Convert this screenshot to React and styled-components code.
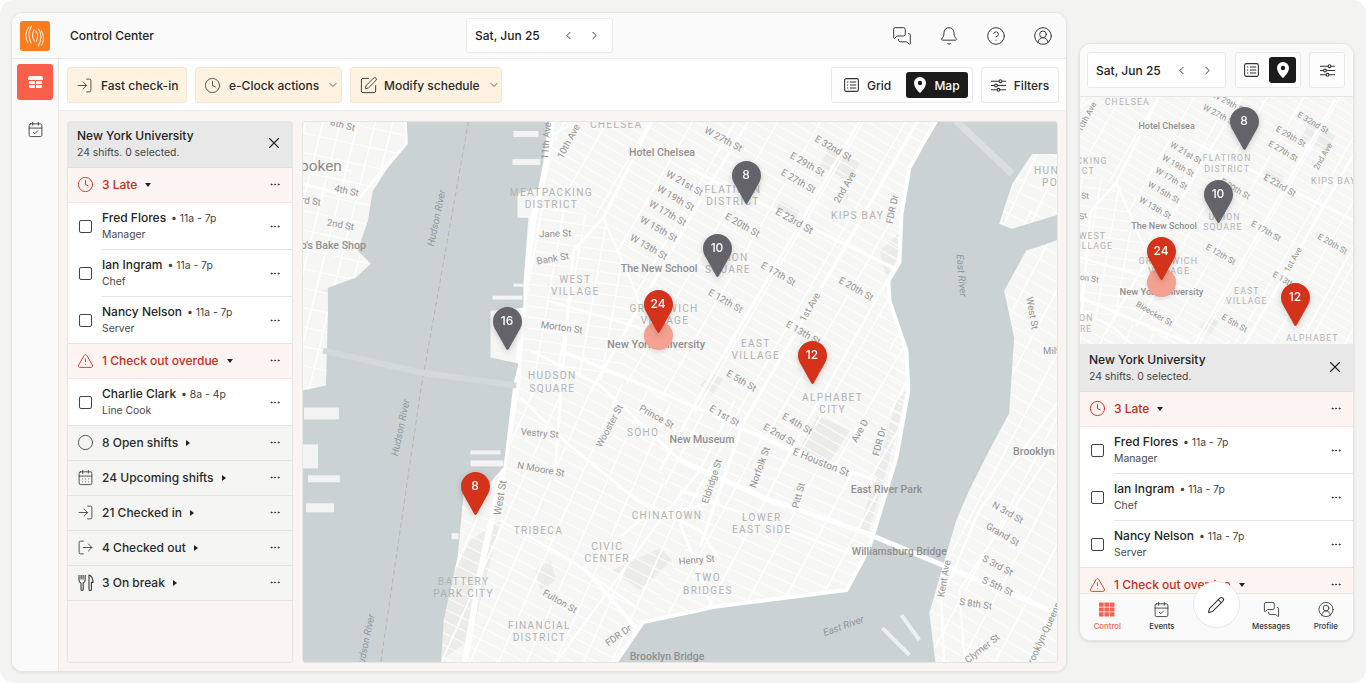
import React from 'react'
import styled, { createGlobalStyle } from 'styled-components'
import {
  Bell, CalendarCheck, CalendarDays, ChevronDown, ChevronLeft, ChevronRight, Circle, CircleHelp,
  CircleUserRound, Clock, Ellipsis, LogIn, LogOut, MessagesSquare, Pencil, SquarePen,
  TriangleAlert, X
} from 'lucide-react'

const Global = createGlobalStyle`
  html, body { margin: 0; padding: 0; background: #fff; }
  body { font-family: Inter, "Liberation Sans", sans-serif; color: #222; }
  * { box-sizing: border-box; }
`

/* ---------- map drawing ---------- */

// parallel lines through (cx, cy) at the given angle, as one path
const lines = (cx, cy, angle, spacing, count, len = 900) => {
  const rad = (angle * Math.PI) / 180
  const dx = Math.cos(rad)
  const dy = Math.sin(rad)
  let d = ''
  for (let i = -count; i <= count; i++) {
    const px = cx - dy * spacing * i
    const py = cy + dx * spacing * i
    d += `M${(px - dx * len).toFixed(1)} ${(py - dy * len).toFixed(1)}L${(px + dx * len).toFixed(1)} ${(py + dy * len).toFixed(1)}`
  }
  return d
}

const regions = [
  { id: 'midtown', pts: '548,100 960,100 915,500 620,382 635,290 603,217 548,210', streets: [760, 300, 30, 9.5, 50], aves: [760, 300, -60, 37, 14] },
  { id: 'village', pts: '520,200 603,217 635,290 620,382 520,370', streets: [570, 300, 8, 11, 16], aves: [570, 300, -80, 22, 8] },
  { id: 'tribeca', pts: '440,370 620,382 690,408 660,480 700,520 620,670 440,670', streets: [570, 500, 27, 11, 22], aves: [570, 500, -66, 26, 10] },
  { id: 'lowereast', pts: '690,408 915,500 860,610 620,670 700,520 660,480', streets: [760, 510, 24, 11, 16], aves: [760, 510, -62, 32, 10] },
  { id: 'brooklyn', pts: '890,210 1070,210 1070,670 890,670', streets: [980, 500, 30, 12, 28], aves: [980, 500, -62, 30, 10] },
  { id: 'greenpoint', pts: '990,100 1070,100 1070,240 990,240', streets: [1030, 170, 25, 12, 14], aves: [1030, 170, -65, 24, 6] },
  { id: 'jersey', pts: '290,100 420,100 420,400 290,400', streets: [350, 220, 12, 19, 14], aves: [350, 220, -76, 17, 10] }
]

const majorRoads = [
  { w: 6, pts: '553,110 547,160 533,217 523,300 517,380 503,467 480,570 463,670' },
  { w: 3, pts: '573,250 603,217 653,118' },
  { w: 3, pts: '573,250 566,330 560,400 555,470' },
  { w: 2.6, pts: '603,217 635,290 648,330' },
  { w: 3, pts: '590,392 700,200 750,118' },
  { w: 2.6, pts: '541,140 575,121' },
  { w: 3.4, pts: '690,168 900,270' },
  { w: 2.6, pts: '548,300 700,345' },
  { w: 3.4, pts: '560,350 680,400 797,452 877,480' },
  { w: 5, pts: '680,460 763,497 867,533 960,572 1060,614' },
  { w: 3, pts: '530,350 600,385 680,460' },
  { w: 3, pts: '680,490 860,557' },
  { w: 3.4, pts: '700,547 743,423 920,117' },
  { w: 3, pts: '660,470 700,395 860,120' },
  { w: 2.6, pts: '780,470 930,205' },
  { w: 3, pts: '680,523 737,670' },
  { w: 4, pts: '583,567 673,670' },
  { w: 2.6, pts: '550,670 660,520 700,470 735,400' },
  { w: 3, pts: '520,397 567,443 637,500 700,530 720,560' },
  { w: 2.6, pts: '500,520 570,560 640,610' },
  { w: 2.6, pts: '583,567 640,520 720,500' },
  { w: 2.6, pts: '945,670 942,600 980,510 1060,400' },
  { w: 2.2, pts: '966,670 960,590 1060,440' },
  { w: 3, pts: '302,183 358,198 385,165 407,143 405,118' },
  { w: 2, pts: '302,160 350,170' }
]

const coast = '938,118 925,140 910,167 902,213 900,262 889,280 890,300 907,350 909,390 897,457 870,547 847,590 743,603 713,607 700,610 643,622 617,660 600,670'

const water = [
  '406,118 407,143 387,167 372,190 367,220 357,250 370,263 355,277 327,287 327,310 326,350 325,385 302,390 302,670 440,670 443,620 457,557 463,493 490,482 503,467 513,383 518,363 490,357 490,310 523,307 523,283 528,217 517,217 517,193 538,187 543,160 548,118',
  `${coast} 937,670 930,613 957,520 970,490 990,450 1010,413 1015,337 1005,290 1027,250 1062,238 1062,213 1013,228 1000,223 1013,183 1033,153 1062,153 1062,118`
]

const piers = [
  [513, 130, 25, 6], [512, 158, 28, 6], [513, 283, 10, 3], [492, 295, 30, 4], [303, 407, 35, 12], [302, 444, 15, 24],
  [307, 475, 32, 7], [305, 503, 28, 9], [470, 450, 30, 4], [470, 460, 33, 6], [451, 533, 7, 6]
]

const parks = [
  '897,400 907,390 890,460 868,535 860,530 880,460',
  '440,600 470,540 500,520 470,640 440,660',
  '535,570 550,560 556,580 540,590',
  '700,385 712,372 724,378 712,395',
  '818,415 850,430 830,462 800,448',
  '880,250 900,232 900,262 888,280',
  '612,570 660,548 672,560 640,590',
  '780,200 800,210 794,222 774,212',
  '830,145 860,162 850,180 820,165',
  '490,357 518,363 512,385 490,380',
  '320,290 355,277 370,263 345,300'
]

const street = { size: 9.6, fill: '#929292' }
const area = { size: 10.2, fill: '#b2b2b2', spacing: 1.3 }
const place = { size: 10.6, fill: '#909090', weight: 500 }
const river = { size: 10, fill: '#8f999d', italic: true }

const labels = [
  ['8th St', 341, 127, 15, street], ['Hoboken', 341, 170, 0, { size: 15.5, fill: '#8a8a8a', anchor: 'end' }], ['4th St', 345, 193, 12, street],
  ['3rd St', 307, 203, 8, street], ['2nd St', 339, 227, 10, street], ["Carlo's Bake Shop", 365, 248, 0, { ...place, anchor: 'end' }],
  ['Hudson River', 439, 218, -78, river], ['11th Ave', 549, 140, -85, street], ['10th Ave', 571, 142, -62, street],
  ['CHELSEA', 616, 127, 0, area], ['Hotel Chelsea', 662, 155, 0, place], ['MEATPACKING', 551, 195, 0, area], ['DISTRICT', 551, 207, 0, area],
  ['Jane St', 555, 236, -2, street], ['Bank St', 553, 261, -10, street], ['WEST', 575, 282, 0, area], ['VILLAGE', 575, 294, 0, area],
  ['Morton St', 561, 330, 8, street], ['HUDSON', 552, 378, 0, area], ['SQUARE', 552, 391, 0, area],
  ['W 21st St', 683, 185, 30, street], ['W 19th St', 674, 200, 30, street], ['W 17th St', 666, 215, 30, street], ['W 15th St', 657, 231, 30, street],
  ['W 13th St', 647, 249, 30, street], ['The New School', 659, 271, 0, place], ['GREENWICH', 664, 311, 0, area], ['VILLAGE', 665, 323, 0, area],
  ['New York University', 656, 347, 0, { ...place, size: 11 }], ['W 27th St', 722, 141, 28, street], ['E 32nd St', 832, 150, 30, street],
  ['E 29th St', 806, 166, 30, street], ['E 27th St', 797, 183, 30, street], ['2nd Ave', 848, 188, -60, street], ['FLATIRON', 733, 192, 0, area],
  ['DISTRICT', 733, 204, 0, area], ['E 23rd St', 793, 223, 30, { ...street, size: 10.4 }], ['E 20th St', 741, 227, 30, street], ['KIPS BAY', 858, 218, 0, area],
  ['FDR Dr', 896, 209, -78, street], ['UNION', 730, 260, 0, area], ['SQUARE', 728, 272, 0, area], ['E 17th St', 777, 276, 30, street],
  ['E 20th St', 855, 291, 30, street], ['East River', 959, 275, 85, river], ['E 12th St', 724, 303, 30, street], ['1st Ave', 813, 308, -60, street],
  ['West St', 1030, 313, 80, street], ['EAST', 756, 346, 0, area], ['VILLAGE', 756, 358, 0, area], ['E 13th St', 802, 335, 30, street],
  ['E 5th St', 740, 383, 30, street], ['HUNTERS', 1035, 173, 0, { ...area, anchor: 'start' }], ['POINT', 1043, 185, 0, { ...area, anchor: 'start' }],
  ['Milton St', 1044, 353, 0, { ...street, anchor: 'start' }], ['ALPHABET', 833, 401, 0, area], ['CITY', 833, 413, 0, area],
  ['E 1st St', 723, 418, 30, street], ['E 4th St', 796, 426, 30, street], ['E 2nd St', 778, 437, 30, street], ['Ave D', 863, 432, -60, street],
  ['FDR Dr', 883, 442, -75, street], ['New Museum', 702, 443, 0, place], ['E Houston St', 820, 465, 22, { ...street, size: 10.4 }], ['Norfolk St', 763, 468, -70, street],
  ['Eldridge St', 715, 482, -72, street], ['Pitt St', 802, 496, -75, street], ['East River Park', 887, 493, 0, place], ['Brooklyn Bowl', 1014, 455, 0, { ...place, anchor: 'start' }],
  ['N 3rd St', 1007, 515, 30, street], ['Grand St', 1002, 537, 30, street], ['S 3rd St', 997, 568, 28, street], ['S 5th St', 997, 589, 25, street],
  ['S 8th St', 976, 607, 8, street], ['Kent Ave', 948, 579, -80, street], ['Williamsburg Bridge', 900, 555, 0, place], ['LOWER', 762, 521, 0, area],
  ['EAST SIDE', 762, 533, 0, area], ['CHINATOWN', 667, 519, 0, area], ['TWO', 708, 581, 0, area], ['BRIDGES', 708, 594, 0, area], ['Henry St', 697, 563, -5, street],
  ['East River', 845, 629, -20, river], ['Clymer St', 985, 651, -38, street], ['Brooklyn-Queens', 1047, 637, -65, street], ['Brooklyn Bridge', 667, 660, 0, place],
  ['Hudson River', 403, 428, -78, river], ['Hudson River', 368, 643, -78, river], ['Vestry St', 539, 436, 5, street], ['N Moore St', 540, 472, 10, street],
  ['West St', 503, 498, -80, { ...street, size: 10.4 }], ['SOHO', 643, 436, 0, area], ['Wooster St', 612, 427, -62, street], ['Prince St', 655, 419, 30, street],
  ['TRIBECA', 538, 534, 0, area], ['CIVIC', 607, 550, 0, area], ['CENTER', 607, 562, 0, area], ['BATTERY', 463, 585, 0, area], ['PARK CITY', 463, 597, 0, area],
  ['Fulton St', 558, 604, 30, street], ['FINANCIAL', 539, 629, 0, area], ['DISTRICT', 539, 641, 0, area], ['FDR Dr', 620, 638, -35, street]
]

const compactLabels = [
  ...labels.filter(([, x, y]) => x > 530 && x < 900 && y < 415),
  ['W 29th St', 734, 127, 28, street],
  ['Bleecker St', 646, 372, 30, street]
]

const MapLabel = styled.text`
  font-family: Roboto, "Liberation Sans", sans-serif;
`

const MapArt = ({ viewBox, compact }) => (
  <svg width="100%" height="100%" viewBox={viewBox} preserveAspectRatio="none" style={{ display: 'block' }}>
    <rect x="280" y="100" width="800" height="590" fill="#f6f6f5" />
    <defs>
      {regions.map(r => <clipPath key={r.id} id={`${compact ? 'c' : 'w'}-${r.id}`}><polygon points={r.pts} /></clipPath>)}
    </defs>
    {parks.map(p => <polygon key={p} points={p} fill="#ecedeb" />)}
    {regions.map(r => (
      <g key={r.id} clipPath={`url(#${compact ? 'c' : 'w'}-${r.id})`} fill="none" stroke="#fff">
        <path d={lines(...r.streets)} strokeWidth="1" />
        <path d={lines(...r.aves)} strokeWidth="1.6" />
      </g>
    ))}
    {majorRoads.map(r => <polyline key={r.pts} points={r.pts} fill="none" stroke="#fff" strokeWidth={r.w} strokeLinejoin="round" />)}
    <polygon points={water[0]} fill="#cbd2d4" />
    <polygon points={water[1]} fill="#cbd2d4" />
    <polyline points={coast} fill="none" stroke="#fff" strokeWidth="4" strokeLinejoin="round" />
    {piers.map(([x, y, w, h]) => <rect key={`${x}-${y}`} x={x} y={y} width={w} height={h} fill="#f2f3f2" />)}
    <polyline points="468,120 420,390 380,662" fill="none" stroke="#b9b4b0" strokeDasharray="5 3" />
    <polyline points="322,350 420,372 516,385" fill="none" stroke="#d3d9da" strokeWidth="6" />
    <polyline points="957,120 1013,173" fill="none" stroke="#d9dfdf" strokeWidth="7" />
    <polyline points="883,628 910,655" fill="none" stroke="#eef0f0" strokeWidth="4" />
    <polyline points="902,615 920,640" fill="none" stroke="#eef0f0" strokeWidth="4" />
    <polyline points="867,533 960,572" fill="none" stroke="#fff" strokeWidth="5" />
    {(compact ? compactLabels : labels).map(([text, x, y, rot, s]) => (
      <MapLabel
        key={`${text}-${x}-${y}`}
        transform={`translate(${x} ${y}) rotate(${rot})`}
        textAnchor={s.anchor || 'middle'}
        fontSize={s.size}
        fill={s.fill}
        fontWeight={s.weight || 400}
        fontStyle={s.italic ? 'italic' : 'normal'}
        letterSpacing={s.spacing || 0}
      >
        {text}
      </MapLabel>
    ))}
  </svg>
)

/* ---------- small drawn icons ---------- */

const Logo = () => (
  <svg width="20" height="22" viewBox="0 0 20 22" fill="none" stroke="#ffeadb" strokeWidth="1.1" strokeLinecap="round">
    <path d="M4 2C.6 6-.2 12 2.6 17" />
    <path d="M6.5 1C3.5 6 3.2 12 6 18" />
    <path d="M9 5C7 9 7.2 13 9.4 16" />
    <path d="M11 6c2.2 3.4 2.2 7 .2 10.5" />
    <path d="M13.6 4c3.2 5 3 11-.4 17" />
    <path d="M16.4 6c2.8 4.6 2.8 9.6 0 14.5" />
  </svg>
)

const TableIcon = () => (
  <svg width="15" height="13" viewBox="0 0 16 14" fill="#fff">
    <path d="M2 0h12a2 2 0 0 1 2 2v2.4H0V2a2 2 0 0 1 2-2z" opacity=".95" />
    <rect x="1" y="5.6" width="6.3" height="3" />
    <rect x="8.7" y="5.6" width="6.3" height="3" />
    <path d="M1 9.8h6.3V13H2.4A1.4 1.4 0 0 1 1 11.6zM8.7 9.8H15v1.8a1.4 1.4 0 0 1-1.4 1.4H8.7z" />
  </svg>
)

const ListIcon = () => (
  <svg width="15" height="14" viewBox="0 0 15 14" fill="none" stroke="#333" strokeWidth="1.1">
    <rect x=".6" y=".6" width="13.8" height="12.8" rx="1.6" />
    <path d="M3 4h1.2M6 4h6.2M3 7h1.2M6 7h6.2M3 10h1.2M6 10h6.2" />
  </svg>
)

const SolidPin = () => (
  <svg width="12" height="16" viewBox="0 0 12 16">
    <path fill="#fff" fillRule="evenodd" d="M6 0a6 6 0 0 1 6 6c0 3.6-3.6 7.8-5.3 9.6a1 1 0 0 1-1.4 0C3.6 13.8 0 9.6 0 6a6 6 0 0 1 6-6zm0 3.8a2.2 2.2 0 1 0 0 4.4 2.2 2.2 0 0 0 0-4.4z" />
  </svg>
)

const SlidersIcon = () => (
  <svg width="15" height="13" viewBox="0 0 15 13" fill="none" stroke="#333" strokeWidth="1.1">
    <path d="M0 2.2h15M0 6.5h15M0 10.8h15" />
    <circle cx="9.5" cy="2.2" r="1.4" fill="#fff" />
    <circle cx="5" cy="6.5" r="1.4" fill="#fff" />
    <circle cx="7.5" cy="10.8" r="1.4" fill="#fff" />
  </svg>
)

const GridSquares = () => (
  <svg width="16" height="14" viewBox="0 0 16 14" fill="#f95f4a">
    {[0, 5.4, 10.8].map(x => [0, 4.9, 9.8].map(y => <rect key={`${x}-${y}`} x={x} y={y} width="4.6" height="4.2" rx=".5" />))}
  </svg>
)

const ForkKnife = () => (
  <svg width="16" height="17" viewBox="0 0 16 17" fill="none" stroke="#3a3a3a" strokeWidth="1.1" strokeLinejoin="round">
    <path d="M1 1v5c0 1.7.9 2.7 2 3.1v6.2a1 1 0 0 0 2.2 0V9.1C6.3 8.7 7.2 7.7 7.2 6V1" />
    <path d="M3.1 1v4.4M5.1 1v4.4" />
    <path d="M11 1c2.6 1 4 3.8 4 7.4h-1.6v6.9a1.2 1.2 0 0 1-2.4 0z" />
  </svg>
)

/* ---------- page frame ---------- */

const Stage = styled.div`
  width: 1366px;
  height: 683px;
  padding: 12px 12px 0 11px;
  background: #f3f3f1;
  border-radius: 14px;
  display: flex;
  align-items: flex-start;
  gap: 12px;
  overflow: hidden;
`

const Desk = styled.div`
  width: 1056px;
  height: 660px;
  flex: none;
  background: #fff;
  border: 1px solid #e4e4e2;
  border-radius: 12px;
  overflow: hidden;
  display: flex;
  flex-direction: column;
  box-shadow: 0 1px 3px rgba(0, 0, 0, .08);
`

const TopBar = styled.header`
  height: 46px;
  flex: none;
  background: #fafafa;
  border-bottom: 1px solid #e6e6e4;
  padding: 0 13px 0 8px;
  display: flex;
  align-items: center;
`

const LogoTile = styled.div`
  width: 30px;
  height: 30px;
  background: #fb7b1f;
  border-radius: 3px;
  display: flex;
  align-items: center;
  justify-content: center;
`

const PageTitle = styled.div`
  margin-left: 20px;
  width: 396px;
  font-size: 12px;
  font-weight: 500;
`

const DatePill = styled.div`
  width: ${p => p.$width}px;
  height: ${p => p.$height}px;
  flex: none;
  background: #fff;
  border: 1px solid #e9e9e7;
  border-radius: 3px;
  padding: 0 11px 0 8px;
  display: flex;
  align-items: center;
  font-size: 12px;
  font-weight: 500;
  white-space: nowrap;

  span { flex: 1; }
  svg { margin-left: 13px; flex: none; }
`

const TopIcons = styled.div`
  margin-left: auto;
  display: flex;
  gap: 27px;
  color: #3a3a3a;
`

const Body = styled.div`
  flex: 1;
  min-height: 0;
  display: flex;
`

const Rail = styled.nav`
  width: 47px;
  flex: none;
  background: #fafafa;
  border-right: 1px solid #e6e6e4;
  padding-top: 5px;
  display: flex;
  flex-direction: column;
  align-items: center;
  gap: 11px;
`

const RailButton = styled.div`
  width: 36px;
  height: 36px;
  border-radius: 3px;
  display: flex;
  align-items: center;
  justify-content: center;
  color: #333;
  background: ${p => (p.$active ? '#f95f4a' : 'transparent')};
`

const Main = styled.main`
  flex: 1;
  min-width: 0;
  display: flex;
  flex-direction: column;
`

const Toolbar = styled.div`
  height: 52px;
  flex: none;
  background: #fff;
  border-bottom: 1px solid #ececea;
  padding: 8px 7px 0 8px;
  display: flex;
  align-items: flex-start;
  gap: 8px;
`

const ActionButton = styled.div`
  width: ${p => p.$width}px;
  height: 36px;
  background: #fff2e0;
  border: 1px solid #f1e7d8;
  border-radius: 3px;
  padding: 0 7px 0 8px;
  display: flex;
  align-items: center;
  gap: 8px;
  font-size: 12px;
  font-weight: 500;
  color: #2a2a2a;
  white-space: nowrap;

  svg { flex: none; color: #3a3a3a; }
  svg:last-child:not(:first-child) { margin-left: auto; }
`

const WidePen = styled(SquarePen)`
  margin-right: -2px;
`

const ViewGroup = styled.div`
  width: ${p => p.$width}px;
  height: ${p => p.$height}px;
  flex: none;
  margin-left: ${p => p.$gap || 0};
  background: #fdfdfd;
  border: 1px solid #e9e9e7;
  border-radius: 3px;
  padding: 4px;
  display: flex;
  align-items: stretch;
`

const ViewOption = styled.div`
  flex: ${p => (p.$grow ? 1 : 'none')};
  width: ${p => p.$width}px;
  padding-left: ${p => p.$inset || 0}px;
  border-radius: 3px;
  display: flex;
  align-items: center;
  justify-content: ${p => (p.$inset ? 'flex-start' : 'center')};
  gap: 8px;
  font-size: 12px;
  font-weight: 500;
  background: ${p => (p.$on ? '#1b1b1b' : 'transparent')};
  color: ${p => (p.$on ? '#fff' : '#2a2a2a')};
`

const Workspace = styled.div`
  flex: 1;
  min-height: 0;
  background: #f8f5f2;
  padding: 10px 8px 8px 8px;
  display: flex;
  gap: 9px;
`

const SidePanel = styled.section`
  width: 226px;
  flex: none;
  background: #f8f5f2;
  border: 1px solid #e6e6e4;
  border-radius: 3px;
  overflow: hidden;
`

const MapFrame = styled.div`
  position: relative;
  flex: ${p => (p.$fill ? 1 : 'none')};
  height: ${p => (p.$height ? `${p.$height}px` : 'auto')};
  border: ${p => (p.$fill ? '1px solid #e6e6e4' : 'none')};
  border-radius: ${p => (p.$fill ? '3px' : '0')};
  overflow: hidden;
`

/* ---------- list rows ---------- */

const PanelHead = styled.div`
  height: ${p => (p.$tall ? 48 : 46)}px;
  background: #e8e8e8;
  padding: ${p => (p.$tall ? 8 : 6)}px 9px 0 9px;
  display: flex;
  justify-content: space-between;
  border-bottom: 1px solid #dfdfdd;
`

const PanelTitle = styled.div`
  font-size: 12px;
  font-weight: 500;
  line-height: 16px;
  color: #222;
`

const PanelSub = styled.div`
  margin-top: 1px;
  font-size: 10.4px;
  line-height: 16px;
  color: #444;
`

const CloseWrap = styled.div`
  margin: 6px 0 0 0;
  color: #222;
`

const SectionRow = styled.div`
  height: 35px;
  padding: 0 11px 1px 9px;
  display: flex;
  align-items: center;
  background: ${p => (p.$alert ? '#fef4f1' : '#f5f5f4')};
  border-bottom: 1px solid ${p => (p.$alert ? '#ebe7e4' : '#e4e4e2')};
  color: ${p => (p.$alert ? '#c22e18' : '#2a2a2a')};
  font-size: 12px;
  font-weight: 500;
`

const IconSlot = styled.div`
  width: 17px;
  height: 17px;
  flex: none;
  margin-right: 8px;
  display: flex;
  align-items: center;
  justify-content: center;
`

const Caret = styled.span`
  margin-left: 8px;
  width: 0;
  height: 0;
  border-style: solid;
  border-color: transparent;
  ${p => (p.$open
    ? 'border-width: 4px 3.5px 0; border-top-color: #222;'
    : 'border-width: 3.5px 0 3.5px 4px; border-left-color: #222;')}
`

const RowMenu = styled.div`
  margin-left: auto;
  width: 12px;
  display: flex;
  justify-content: center;
  color: #333;
`

const ShiftRow = styled.div`
  position: relative;
  height: 47px;
  background: #fff;
  padding: 0 11px 0 9px;
  display: flex;
  align-items: center;
  border-bottom: 1px solid ${p => (p.$inset ? 'transparent' : '#e4e4e2')};

  ${p => p.$inset && `
    &::after {
      content: '';
      position: absolute;
      left: 34px;
      right: 0;
      bottom: -1px;
      height: 1px;
      background: #e4e4e2;
    }
  `}
`

const Check = styled.div`
  width: 13px;
  height: 13px;
  margin: 0 10px 0 2px;
  flex: none;
  border: 1.4px solid #444;
  border-radius: 2px;
`

const ShiftName = styled.div`
  font-size: 12px;
  font-weight: 500;
  line-height: 16px;
  color: #262626;
  white-space: nowrap;

  small {
    margin-left: 2px;
    font-size: 10.4px;
    font-weight: 400;
    color: #444;
  }
`

const ShiftRole = styled.div`
  font-size: 10.4px;
  line-height: 15px;
  color: #4a4a4a;
`

const dots = <Ellipsis size={13} strokeWidth={2} />

const Section = ({ icon, label, open, alert }) => (
  <SectionRow $alert={alert}>
    <IconSlot>{icon}</IconSlot>
    {label}
    <Caret $open={open} />
    <RowMenu>{dots}</RowMenu>
  </SectionRow>
)

const Shift = ({ name, time, role, inset }) => (
  <ShiftRow $inset={inset}>
    <Check />
    <div>
      <ShiftName>{name}<small> • {time}</small></ShiftName>
      <ShiftRole>{role}</ShiftRole>
    </div>
    <RowMenu>{dots}</RowMenu>
  </ShiftRow>
)

const PanelHeader = ({ tall }) => (
  <PanelHead $tall={tall}>
    <div>
      <PanelTitle>New York University</PanelTitle>
      <PanelSub>24 shifts. 0 selected.</PanelSub>
    </div>
    <CloseWrap><X size={18} strokeWidth={1.5} /></CloseWrap>
  </PanelHead>
)

const plainIcon = { size: 17, strokeWidth: 1.2, color: '#3a3a3a' }

const LateRows = () => (
  <>
    <Section alert open label="3 Late" icon={<Clock size={17} strokeWidth={1.3} color="#c22e18" />} />
    <Shift inset name="Fred Flores" time="11a - 7p" role="Manager" />
    <Shift inset name="Ian Ingram" time="11a - 7p" role="Chef" />
    <Shift name="Nancy Nelson" time="11a - 7p" role="Server" />
    <Section alert open label="1 Check out overdue" icon={<TriangleAlert size={20} strokeWidth={1.2} color="#c22e18" />} />
  </>
)

/* ---------- pins ---------- */

const PinSpot = styled.div.attrs(p => ({ style: { left: p.$x, top: p.$y } }))`
  position: absolute;
  width: 29px;
  height: 43px;
  margin: -43px 0 0 -14.5px;
  filter: drop-shadow(0 2px 3px rgba(0, 0, 0, .18));

  svg { display: block; }
`

const PinCount = styled.span`
  position: absolute;
  left: 0;
  right: 0;
  top: 6px;
  text-align: center;
  font-size: 12px;
  font-weight: 500;
  line-height: 16px;
  color: #fff;
`

const Pulse = styled.div.attrs(p => ({ style: { left: p.$x, top: p.$y } }))`
  position: absolute;
  width: 29px;
  height: 29px;
  margin: -12.5px 0 0 -14.5px;
  border-radius: 50%;
  background: #f5a192;
  box-shadow: 0 2px 4px rgba(0, 0, 0, .12);
`

const Pin = ({ x, y, n, red }) => (
  <PinSpot $x={x} $y={y}>
    <svg width="29" height="43" viewBox="0 0 29 43">
      <path
        fill={red ? '#d4321a' : '#64636a'}
        d="M14.5 0C22.5 0 29 6.5 29 14.5c0 3.4-1.1 6.3-3 9.3L15.6 42.3c-.5.9-1.7.9-2.2 0L3 23.8C1.1 20.8 0 17.9 0 14.5 0 6.5 6.5 0 14.5 0z"
      />
    </svg>
    <PinCount>{n}</PinCount>
  </PinSpot>
)

/* ---------- phone ---------- */

const Phone = styled.aside`
  width: 275px;
  height: 598px;
  margin-top: 31px;
  flex: none;
  background: #fff;
  border: 1px solid #e4e4e2;
  border-radius: 12px;
  overflow: hidden;
  display: flex;
  flex-direction: column;
  box-shadow: 0 1px 3px rgba(0, 0, 0, .1);
`

const PhoneBar = styled.div`
  height: 53px;
  flex: none;
  background: #fafafa;
  border-bottom: 1px solid #e6e6e4;
  padding: 0 7px;
  display: flex;
  align-items: center;
`

const IconButton = styled.div`
  width: 36px;
  height: 36px;
  margin-left: 8px;
  flex: none;
  background: #fdfdfd;
  border: 1px solid #e9e9e7;
  border-radius: 3px;
  display: flex;
  align-items: center;
  justify-content: center;
`

const PhoneList = styled.div`
  flex: 1;
  min-height: 0;
  overflow: hidden;
  background: #fff;
`

const BottomNav = styled.nav`
  height: 47px;
  flex: none;
  background: #fafafa;
  border-top: 1px solid #e6e6e4;
  display: grid;
  grid-template-columns: repeat(5, 1fr);
  position: relative;
`

const NavItem = styled.div`
  display: flex;
  flex-direction: column;
  align-items: center;
  padding-top: 7px;
  gap: 3px;
  font-size: 7.8px;
  font-weight: 500;
  line-height: 11px;
  color: ${p => (p.$active ? '#f95f4a' : '#333')};

  svg { height: 17px; display: block; }
`

const NavFab = styled.div`
  position: relative;
`

const Fab = styled.div`
  position: absolute;
  left: 50%;
  top: -13px;
  width: 47px;
  height: 47px;
  margin-left: -23.5px;
  background: #fff;
  border: 1px solid #e6e6e4;
  border-radius: 50%;
  display: flex;
  align-items: center;
  justify-content: center;
  color: #333;
`

const sectionIcon = Icon => <Icon {...plainIcon} />

export default function App() {
  return (
    <Stage>
      <Global />
      <Desk>
        <TopBar>
          <LogoTile><Logo /></LogoTile>
          <PageTitle>Control Center</PageTitle>
          <DatePill $width={147} $height={35}>
            <span>Sat, Jun 25</span>
            <ChevronLeft size={13} strokeWidth={1.6} />
            <ChevronRight size={13} strokeWidth={1.6} />
          </DatePill>
          <TopIcons>
            <MessagesSquare size={20} strokeWidth={1.2} />
            <Bell size={20} strokeWidth={1.2} />
            <CircleHelp size={20} strokeWidth={1.2} />
            <CircleUserRound size={20} strokeWidth={1.2} />
          </TopIcons>
        </TopBar>
        <Body>
          <Rail>
            <RailButton $active><TableIcon /></RailButton>
            <RailButton><CalendarCheck size={17} strokeWidth={1.2} /></RailButton>
          </Rail>
          <Main>
            <Toolbar>
              <ActionButton $width={120}>
                <LogIn size={17} strokeWidth={1.2} />Fast check-in
              </ActionButton>
              <ActionButton $width={147}>
                <Clock size={17} strokeWidth={1.2} />e-Clock actions<ChevronDown size={12} strokeWidth={1.6} />
              </ActionButton>
              <ActionButton $width={152}>
                <WidePen size={19} strokeWidth={1.2} />Modify schedule<ChevronDown size={12} strokeWidth={1.6} />
              </ActionButton>
              <ViewGroup $width={142} $height={36} $gap="auto">
                <ViewOption $grow $inset={8}><ListIcon />Grid</ViewOption>
                <ViewOption $on $width={62}><SolidPin />Map</ViewOption>
              </ViewGroup>
              <ViewGroup $width={78} $height={36}>
                <ViewOption $grow><SlidersIcon />Filters</ViewOption>
              </ViewGroup>
            </Toolbar>
            <Workspace>
              <SidePanel>
                <PanelHeader />
                <LateRows />
                <Shift name="Charlie Clark" time="8a - 4p" role="Line Cook" />
                <Section label="8 Open shifts" icon={sectionIcon(Circle)} />
                <Section label="24 Upcoming shifts" icon={sectionIcon(CalendarDays)} />
                <Section label="21 Checked in" icon={sectionIcon(LogIn)} />
                <Section label="4 Checked out" icon={sectionIcon(LogOut)} />
                <Section label="3 On break" icon={<ForkKnife />} />
              </SidePanel>
              <MapFrame $fill>
                <MapArt viewBox="302 121 756 541" />
                <Pulse $x={355} $y={211} />
                <Pin red x={355} y={211} n="24" />
                <Pin x={204} y={228} n="16" />
                <Pin x={443} y={82} n="8" />
                <Pin x={414} y={155} n="10" />
                <Pin red x={509} y={262} n="12" />
                <Pin red x={172} y={393} n="8" />
              </MapFrame>
            </Workspace>
          </Main>
        </Body>
      </Desk>
      <Phone>
        <PhoneBar>
          <DatePill $width={139} $height={36}>
            <span>Sat, Jun 25</span>
            <ChevronLeft size={13} strokeWidth={1.6} />
            <ChevronRight size={13} strokeWidth={1.6} />
          </DatePill>
          <ViewGroup $width={66} $height={36} $gap="9px">
            <ViewOption $grow $inset={4}><ListIcon /></ViewOption>
            <ViewOption $on $width={27}><SolidPin /></ViewOption>
          </ViewGroup>
          <IconButton><SlidersIcon /></IconButton>
        </PhoneBar>
        <MapFrame $height={247}>
          <MapArt compact viewBox="560.5 117.4 320 287" />
          <Pulse $x={81} $y={183} />
          <Pin red x={81} y={183} n="24" />
          <Pin x={164} y={53} n="8" />
          <Pin x={138} y={126} n="10" />
          <Pin red x={215} y={229} n="12" />
        </MapFrame>
        <PhoneList>
          <PanelHeader tall />
          <LateRows />
        </PhoneList>
        <BottomNav>
          <NavItem $active><GridSquares />Control</NavItem>
          <NavItem><CalendarCheck size={17} strokeWidth={1.2} />Events</NavItem>
          <NavFab><Fab><Pencil size={18} strokeWidth={1.4} /></Fab></NavFab>
          <NavItem><MessagesSquare size={19} strokeWidth={1.2} />Messages</NavItem>
          <NavItem><CircleUserRound size={18} strokeWidth={1.2} />Profile</NavItem>
        </BottomNav>
      </Phone>
    </Stage>
  )
}
